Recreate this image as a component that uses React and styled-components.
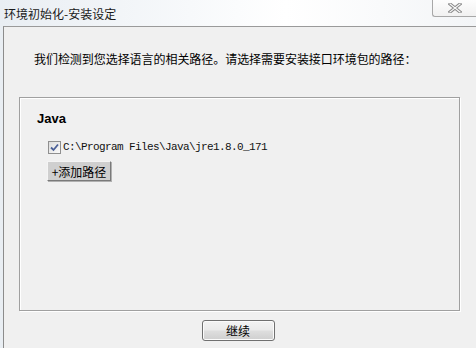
import React, { useState } from "react";
import styled, { createGlobalStyle } from "styled-components";

const GlobalStyle = createGlobalStyle`
  html, body {
    margin: 0;
    padding: 0;
    width: 476px;
    height: 348px;
    overflow: hidden;
    background: #f0f0f0;
    font-family: "Noto Sans CJK SC", "Liberation Sans", sans-serif;
  }
`;

const CJK = `"Noto Sans CJK SC", "Liberation Sans", sans-serif`;

export default function App() {
  const [checked, setChecked] = useState(true);

  return (
    <Window>
      <GlobalStyle />
      <TitleBar>
        <Title>环境初始化-安装设定</Title>
        <CloseButton>
          <svg width="14" height="10" viewBox="0 0 14 10">
            <path
              d="M2 1 L12 9 M12 1 L2 9"
              stroke="#8a8a8a"
              strokeWidth="3.2"
              strokeLinecap="square"
            />
            <path
              d="M2 1 L12 9 M12 1 L2 9"
              stroke="#fafafa"
              strokeWidth="1.2"
              strokeLinecap="square"
            />
          </svg>
        </CloseButton>
      </TitleBar>
      <Body>
        <Prompt>我们检测到您选择语言的相关路径。请选择需要安装接口环境包的路径：</Prompt>
        <Panel>
          <GroupTitle>Java</GroupTitle>
          <PathRow>
            <Check onClick={() => setChecked(!checked)}>
              {checked && (
                <svg width="9" height="9" viewBox="0 0 9 9">
                  <path d="M1 4.5 L3.5 7 L8 1.5" stroke="#4a5f97" strokeWidth="1.8" fill="none" />
                </svg>
              )}
            </Check>
            <PathText>C:\Program Files\Java\jre1.8.0_171</PathText>
          </PathRow>
          <AddButton>+添加路径</AddButton>
        </Panel>
        <Footer>
          <ContinueButton>继续</ContinueButton>
        </Footer>
      </Body>
    </Window>
  );
}

const Window = styled.div`
  width: 476px;
  height: 348px;
  display: flex;
  flex-direction: column;
  background: linear-gradient(90deg, #e9eef3 0%, #f7f9fb 40%, #ffffff 60%, #f3f5f7 100%);
`;

const TitleBar = styled.div`
  height: 26px;
  display: flex;
  align-items: flex-start;
  justify-content: space-between;
  flex-shrink: 0;
`;

const Title = styled.div`
  font-family: ${CJK};
  font-size: 12px;
  line-height: 14px;
  color: #1a1a1a;
  padding: 7px 0 0 4px;
`;

const CloseButton = styled.div`
  width: 44px;
  height: 17px;
  box-sizing: border-box;
  border: 1px solid #a8a8a8;
  border-top: none;
  border-right: none;
  border-bottom-left-radius: 3px;
  background: linear-gradient(#fdfdfd, #f1f1f1);
  display: flex;
  align-items: center;
  justify-content: center;
`;

const Body = styled.div`
  flex: 1;
  margin-left: 3px;
  border-top: 1px solid #9a9a9a;
  border-left: 1px solid #8c8c8c;
  background: #f0f0f0;
  display: flex;
  flex-direction: column;
`;

const Prompt = styled.div`
  font-family: ${CJK};
  font-size: 12px;
  line-height: 14px;
  color: #000;
  padding: 25px 0 0 30px;
  letter-spacing: -0.05px;
`;

const Panel = styled.div`
  margin: 31px 0 0 15px;
  width: 441px;
  height: 214px;
  box-sizing: border-box;
  border: 1px solid #a0a0a0;
  box-shadow: 1px 1px 0 #ffffff, inset 1px 1px 0 #ffffff;
  padding: 13px 0 0 17px;
  display: flex;
  flex-direction: column;
  align-items: flex-start;
`;

const GroupTitle = styled.div`
  font-family: "Liberation Sans", sans-serif;
  font-weight: bold;
  font-size: 13px;
  line-height: 16px;
  color: #000;
`;

const PathRow = styled.div`
  display: flex;
  align-items: center;
  gap: 2px;
  margin: 13px 0 0 11px;
`;

const Check = styled.div`
  width: 13px;
  height: 13px;
  box-sizing: border-box;
  border: 1px solid #8f8f8f;
  background: linear-gradient(135deg, #dcdcdc, #fafafa);
  display: flex;
  align-items: center;
  justify-content: center;
  cursor: pointer;
`;

const PathText = styled.div`
  font-family: "Liberation Mono", monospace;
  font-size: 11px;
  letter-spacing: -0.6px;
  line-height: 14px;
  color: #111;
`;

const AddButton = styled.button`
  margin: 7px 0 0 10px;
  width: 64px;
  height: 20px;
  padding: 0;
  font-family: ${CJK};
  font-size: 12px;
  color: #000;
  background: #cfcfcf;
  border: 1px solid;
  border-color: #f4f4f4 #7a7a7a #7a7a7a #f4f4f4;
  box-shadow: 1px 1px 0 #b0b0b0;
`;

const Footer = styled.div`
  display: flex;
  justify-content: center;
  padding: 9px 0 0 0;
  margin-left: -4px;
`;

const ContinueButton = styled.button`
  width: 73px;
  height: 21px;
  padding: 0;
  font-family: ${CJK};
  font-size: 12px;
  color: #000;
  border: 1px solid #707070;
  border-radius: 3px;
  background: linear-gradient(#f3f3f3 0%, #ebebeb 45%, #dddddd 55%, #cfcfcf 100%);
  box-shadow: inset 0 0 0 1px #fbfbfb;
`;
